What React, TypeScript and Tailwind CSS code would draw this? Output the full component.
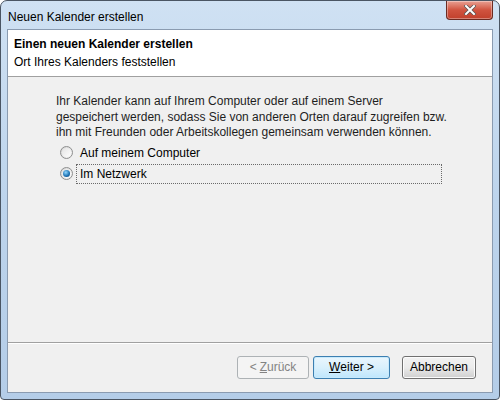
import React from "react";

const font = { fontFamily: '"Liberation Sans", Arial, sans-serif' };

function Radio({ checked }: { checked?: boolean }) {
  return (
    <span className="w-[13px] h-[13px] rounded-full border border-[#8e8f8f] bg-gradient-to-br from-[#d6d6d6] to-[#f7f7f7] flex items-center justify-center shrink-0">
      <span className="w-[9px] h-[9px] rounded-full bg-gradient-to-br from-[#e4e4e4] to-[#fefefe] flex items-center justify-center">
        {checked && (
          <span className="w-[7px] h-[7px] rounded-full bg-[radial-gradient(circle_at_40%_35%,#8fd6ff,#1a6fb0_60%,#0b3f75)]" />
        )}
      </span>
    </span>
  );
}

function Btn({ children, disabled, def, w }: { children: React.ReactNode; disabled?: boolean; def?: boolean; w: string }) {
  return (
    <div
      className={
        "h-[23px] rounded-[3px] border flex items-center justify-center text-[12px] " +
        w +
        " " +
        (disabled
          ? "border-[#adb2b5] bg-[#f4f4f4] text-[#838383]"
          : def
          ? "border-[#3c7fb1] bg-gradient-to-b from-[#eaf6fd] via-[#d9f0fc] to-[#bee6fd] text-black shadow-[inset_0_0_0_1px_#c8eafc]"
          : "border-[#707070] bg-gradient-to-b from-[#f2f2f2] via-[#ebebeb] to-[#cfcfcf] text-black shadow-[inset_0_0_0_1px_#fcfcfc]")
      }
    >
      {children}
    </div>
  );
}

export default function App() {
  return (
    <div className="w-[500px] h-[400px] bg-white" style={font}>
      <div className="w-[500px] h-[400px] rounded-t-[7px] rounded-b-[4px] border border-[#4a5563] bg-gradient-to-b from-[#cfe1f3] via-[#bdd4ec] to-[#b4cde8] flex flex-col">
        <div className="h-[28px] flex items-start shrink-0">
          <div className="pl-[7px] pt-[7px] text-[12px] text-black flex-1">Neuen Kalender erstellen</div>
          <div className="mr-[6px] w-[47px] h-[19px] rounded-b-[4px] border border-t-0 border-[#6b2b22] bg-gradient-to-b from-[#e8a093] via-[#d0533f] to-[#c1402c] flex items-center justify-center shadow-[inset_0_0_0_1px_rgba(255,255,255,0.35)]">
            <svg width="12" height="10" viewBox="0 0 12 10">
              <path d="M2 1 L10 9 M10 1 L2 9" stroke="#555" strokeWidth="3.4" strokeLinecap="square" />
              <path d="M2 1 L10 9 M10 1 L2 9" stroke="#fff" strokeWidth="2" strokeLinecap="square" />
            </svg>
          </div>
        </div>
        <div className="mx-[6px] mb-[6px] flex-1 border border-[#8a9bb0] flex flex-col bg-[#f0f0f0]">
          <div className="h-[47px] bg-white border-b border-[#a0a0a0] pl-[6px] pt-[7px] flex flex-col shrink-0">
            <div className="text-[12px] font-bold text-black leading-[15px]">Einen neuen Kalender erstellen</div>
            <div className="text-[12px] text-black leading-[15px] mt-[3px]">Ort Ihres Kalenders feststellen</div>
          </div>
          <div className="flex-1 pl-[48px] pt-[17px]">
            <div className="text-[12px] leading-[15.5px] text-[#1e1e1e] w-[400px]">
              Ihr Kalender kann auf Ihrem Computer oder auf einem Server
              <br />
              gespeichert werden, sodass Sie von anderen Orten darauf zugreifen bzw.
              <br />
              ihn mit Freunden oder Arbeitskollegen gemeinsam verwenden können.
            </div>
            <div className="mt-[4px] flex items-center h-[16px] pl-[4px] gap-[7px] text-[12px] text-black">
              <Radio />
              <span>Auf meinem Computer</span>
            </div>
            <div className="mt-[3px] flex items-center h-[20px] pl-[4px] gap-[3px] text-[12px] text-black">
              <Radio checked />
              <span className="h-[20px] w-[366px] border border-dotted border-[#6a6a6a] flex items-center pl-[3px]">Im Netzwerk</span>
            </div>
          </div>
          <div className="h-[2px] border-t border-[#a0a0a0] border-b-white border-b shrink-0" />
          <div className="h-[48px] flex items-center justify-end pr-[16px] shrink-0 pb-[2px]">
            <Btn disabled w="w-[72px]">
              &lt; <span className="underline ml-[3px]">Z</span>urück
            </Btn>
            <div className="w-[4px]" />
            <Btn def w="w-[77px]">
              <span className="underline">W</span>eiter &gt;
            </Btn>
            <div className="w-[12px]" />
            <Btn w="w-[74px]">Abbrechen</Btn>
          </div>
        </div>
      </div>
    </div>
  );
}
